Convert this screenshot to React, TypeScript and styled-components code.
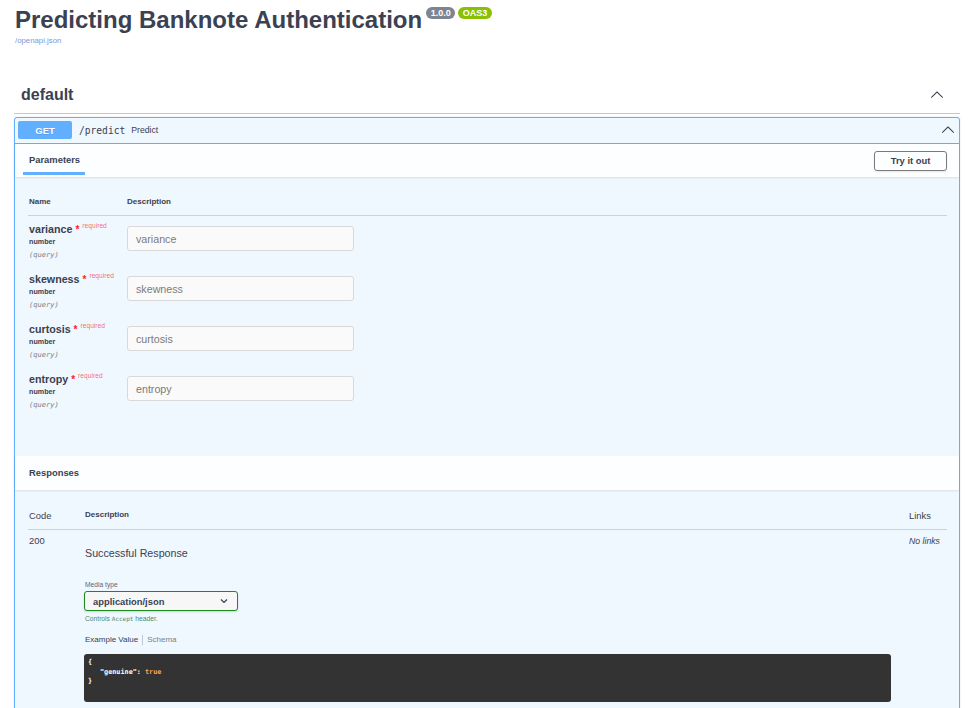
import React from "react";
import styled, { createGlobalStyle } from "styled-components";

const Global = createGlobalStyle`
  html, body { margin: 0; padding: 0; background: #fff; }
  body { font-family: "Liberation Sans", Arial, sans-serif; color: #3b4151; }
  * { box-sizing: border-box; }
`;

const Page = styled.div`
  padding: 8px 13px 0 14px;
`;

const Info = styled.div`
  display: flex;
  flex-direction: column;
  align-items: flex-start;
`;

const Title = styled.h2`
  margin: 0;
  font-size: 24px;
  line-height: 24px;
  font-weight: 700;
  color: #3b4151;
  display: flex;
  align-items: flex-start;
  padding-left: 1px;
`;

const Badge = styled.span<{ $bg: string }>`
  display: inline-block;
  margin-left: ${(p) => (p.$bg === "#7d8492" ? "4px" : "3px")};
  margin-top: -1px;
  height: 12px;
  line-height: 12px;
  padding: 0 4.5px;
  border-radius: 7px;
  background: ${(p) => p.$bg};
  color: #fff;
  font-size: 9px;
  font-weight: 700;
`;

const SpecLink = styled.a`
  margin-top: 4px;
  padding-left: 1px;
  font-size: 7.8px;
  line-height: 10px;
  color: #7d95e0;
  text-decoration: none;
`;

const TagHeading = styled.div`
  margin-top: 31px;
  height: 37px;
  display: flex;
  align-items: center;
  justify-content: space-between;
  padding: 0 16px 0 7px;
  border-bottom: 1px solid rgba(59, 65, 81, 0.3);
`;

const TagName = styled.h3`
  margin: 0;
  font-size: 16px;
  line-height: 20px;
  font-weight: 700;
  color: #3b4151;
`;

const Chevron = ({ size = 13 }: { size?: number }) => (
  <svg width={size} height={size} viewBox="0 0 20 20" aria-hidden="true">
    <path
      transform="rotate(180 10 10)"
      fill="#3b4151"
      d="M17.418 6.109c.272-.268.709-.268.979 0s.271.701 0 .969l-7.908 7.83c-.27.268-.707.268-.979 0l-7.908-7.83c-.27-.268-.27-.701 0-.969.271-.268.709-.268.979 0L10 13.25l7.418-7.141z"
    />
  </svg>
);

const OpBlock = styled.div`
  margin-top: 3px;
  border: 1px solid #61affe;
  border-radius: 3px;
  background: #eff7ff;
  box-shadow: 0 0 2px rgba(0, 0, 0, 0.12);
`;

const Summary = styled.div`
  display: flex;
  align-items: center;
  padding: 3px 3px 4px 3px;
  border-bottom: 1px solid #61affe;
`;

const Method = styled.span`
  width: 54px;
  height: 18px;
  display: flex;
  align-items: center;
  justify-content: center;
  background: #61affe;
  border-radius: 2px;
  color: #fff;
  font-size: 9.4px;
  font-weight: 700;
  text-shadow: 0 1px 0 rgba(0, 0, 0, 0.1);
`;

const Path = styled.span`
  margin-left: 7px;
  font-family: "DejaVu Sans Mono", "Liberation Mono", monospace;
  font-size: 9.6px;
  color: #3b4151;
`;

const SummaryText = styled.span`
  margin-left: 6px;
  font-size: 8.7px;
  color: #3b4151;
  flex: 1;
`;

const SummaryArrow = styled.span`
  display: flex;
  margin-right: 1px;
`;

const SectionHeader = styled.div<{ $h: number }>`
  height: ${(p) => p.$h}px;
  display: flex;
  align-items: center;
  justify-content: space-between;
  background: rgba(255, 255, 255, 0.8);
  box-shadow: 0 1px 2px rgba(0, 0, 0, 0.1);
  padding: 0 12px 0 8px;
  position: relative;
`;

const Tab = styled.div`
  align-self: flex-start;
  padding: 10px 5px 6px 6px;
  font-size: 9.4px;
  line-height: 12px;
  font-weight: 700;
  color: #3b4151;
  border-bottom: 3px solid #61affe;
`;

const SectionTitle = styled.h4`
  margin: 0;
  padding-left: 6px;
  font-size: 9.4px;
  line-height: 12px;
  font-weight: 700;
  color: #3b4151;
`;

const TryButton = styled.button`
  width: 73px;
  height: 20px;
  border: 1.4px solid #7a7a7a;
  border-radius: 3px;
  background: transparent;
  box-shadow: 0 1px 2px rgba(0, 0, 0, 0.1);
  font-family: "Liberation Sans", Arial, sans-serif;
  font-size: 9.4px;
  font-weight: 700;
  color: #3b4151;
  padding: 0;
`;

const ParamsBody = styled.div`
  padding: 20px 12px 40px 13px;
`;

const ParamGrid = styled.div`
  display: grid;
  grid-template-columns: 99px 1fr;
`;

const HeadCell = styled.div<{ $size?: number; $weight?: number; $pl?: number }>`
  font-size: ${(p) => p.$size ?? 8}px;
  line-height: ${(p) => ((p.$size ?? 8) > 9 ? 12 : 10)}px;
  font-weight: ${(p) => p.$weight ?? 700};
  color: #3b4151;
  padding: 0 0 ${(p) => ((p.$size ?? 8) > 9 ? 7 : 8)}px ${(p) => p.$pl ?? 0}px;
  border-bottom: 1px solid rgba(59, 65, 81, 0.2);
`;

const ParamRow = styled.div`
  display: contents;
`;

const NameCell = styled.div`
  height: 50px;
  padding: 7px 0 0 1px;
  display: flex;
  flex-direction: column;
`;

const ParamName = styled.div`
  font-size: 10.7px;
  line-height: 13px;
  font-weight: 700;
  color: #3b4151;
  display: flex;
  align-items: flex-start;
`;

const Star = styled.span`
  color: #ff2020;
  margin-left: 3px;
  font-size: 10px;
`;

const Required = styled.span`
  margin-left: 3px;
  margin-top: -4px;
  font-size: 6.7px;
  font-weight: 400;
  color: rgba(255, 0, 0, 0.6);
`;

const ParamType = styled.div`
  margin-top: 1px;
  font-size: 7.2px;
  line-height: 10px;
  font-weight: 700;
  color: #3b4151;
`;

const ParamIn = styled.div`
  margin-top: 3px;
  font-family: "DejaVu Sans Mono", "Liberation Mono", monospace;
  font-size: 7.1px;
  line-height: 10px;
  font-style: italic;
  color: #808080;
`;

const InputCell = styled.div`
  height: 50px;
  padding-top: 10px;
`;

const TextInput = styled.input`
  width: 227px;
  height: 25px;
  border: 1px solid #d9d9d9;
  border-radius: 3px;
  background: #fafafa;
  padding: 0 8px;
  font-family: "Liberation Sans", Arial, sans-serif;
  font-size: 10.7px;
  color: #3b4151;
  outline: none;
  &::placeholder { color: #7a7a7a; }
`;

const ResponsesBody = styled.div`
  padding: 20px 12px 24px 13px;
`;

const RespGrid = styled.div`
  display: grid;
  grid-template-columns: 56px 1fr 38px;
`;

const RespCell = styled.div`
  padding: 5px 0 0 1px;
  font-size: 9.4px;
  line-height: 12px;
  color: #3b4151;
`;

const DescCell = styled.div`
  padding: 5px 18px 0 0;
  display: flex;
  flex-direction: column;
  align-items: flex-start;
`;

const Markdown = styled.p`
  margin: 11px 0 0 1px;
  font-size: 10.7px;
  line-height: 14px;
  color: #3b4151;
`;

const SmallLabel = styled.div<{ $color?: string; $mt: number }>`
  margin-top: ${(p) => p.$mt}px;
  margin-left: 1px;
  font-size: 6.7px;
  line-height: 8px;
  color: ${(p) => p.$color ?? "#5f6673"};
`;

const Mono = styled.code`
  font-family: "DejaVu Sans Mono", "Liberation Mono", monospace;
  font-size: 6px;
`;

const Select = styled.div`
  margin-top: 2px;
  width: 154px;
  height: 20px;
  border: 1px solid #1d8a1d;
  border-radius: 3px;
  background: #f7f7f7;
  box-shadow: 0 1px 2px rgba(0, 0, 0, 0.15);
  display: flex;
  align-items: center;
  justify-content: space-between;
  padding: 0 9px 0 8px;
  font-size: 9.4px;
  font-weight: 700;
  color: #3b4151;
`;

const ExampleTabs = styled.div`
  margin-top: 12px;
  display: flex;
  align-items: center;
  font-size: 8px;
  line-height: 10px;
  margin-left: 1px;
`;

const ExTab = styled.span<{ $active?: boolean }>`
  color: ${(p) => (p.$active ? "#3b4151" : "#7a7f8c")};
`;

const Divider = styled.span`
  width: 1px;
  height: 10px;
  background: rgba(59, 65, 81, 0.25);
  margin: 0 4px;
`;

const CodeBlock = styled.pre`
  margin: 9px 0 0 0;
  width: 807px;
  height: 48px;
  background: #333;
  border-radius: 3px;
  padding: 4px 4px;
  font-family: "DejaVu Sans Mono", "Liberation Mono", monospace;
  font-size: 6.8px;
  line-height: 9.5px;
  font-weight: 700;
  color: #fff;
`;

const CodeLine = styled.div<{ $indent?: number }>`
  padding-left: ${(p) => p.$indent ?? 0}px;
`;

const Lit = styled.span`
  color: #f0a95e;
`;

const NoLinks = styled.div`
  padding: 5px 0 0 0;
  font-size: 8.7px;
  line-height: 12px;
  font-style: italic;
  color: #3b4151;
`;

const params = ["variance", "skewness", "curtosis", "entropy"];

export default function App() {
  return (
    <>
      <Global />
      <Page>
        <Info>
          <Title>
            Predicting Banknote Authentication
            <Badge $bg="#7d8492">1.0.0</Badge>
            <Badge $bg="#89bf04">OAS3</Badge>
          </Title>
          <SpecLink href="#">/openapi.json</SpecLink>
        </Info>

        <TagHeading>
          <TagName>default</TagName>
          <Chevron size={14} />
        </TagHeading>

        <OpBlock>
          <Summary>
            <Method>GET</Method>
            <Path>/predict</Path>
            <SummaryText>Predict</SummaryText>
            <SummaryArrow>
              <Chevron size={14} />
            </SummaryArrow>
          </Summary>

          <SectionHeader $h={33}>
            <Tab>Parameters</Tab>
            <TryButton>Try it out</TryButton>
          </SectionHeader>

          <ParamsBody>
            <ParamGrid>
              <HeadCell $pl={1}>Name</HeadCell>
              <HeadCell>Description</HeadCell>
              {params.map((p) => (
                <ParamRow key={p}>
                  <NameCell>
                    <ParamName>
                      {p}
                      <Star>*</Star>
                      <Required>required</Required>
                    </ParamName>
                    <ParamType>number</ParamType>
                    <ParamIn>(query)</ParamIn>
                  </NameCell>
                  <InputCell>
                    <TextInput placeholder={p} />
                  </InputCell>
                </ParamRow>
              ))}
            </ParamGrid>
          </ParamsBody>

          <SectionHeader $h={34}>
            <SectionTitle>Responses</SectionTitle>
          </SectionHeader>

          <ResponsesBody>
            <RespGrid>
              <HeadCell $size={9.4} $weight={400} $pl={1}>Code</HeadCell>
              <HeadCell $pl={1}>Description</HeadCell>
              <HeadCell $size={9.4} $weight={400}>Links</HeadCell>
              <RespCell>200</RespCell>
              <DescCell>
                <Markdown>Successful Response</Markdown>
                <SmallLabel $mt={21}>Media type</SmallLabel>
                <Select>
                  application/json
                  <svg width="8" height="6" viewBox="0 0 8 6" aria-hidden="true">
                    <path d="M1 1.5l3 3 3-3" fill="none" stroke="#3b4151" strokeWidth="1.2" />
                  </svg>
                </Select>
                <SmallLabel $mt={4} $color="#4a8a6e">
                  Controls <Mono>Accept</Mono> header.
                </SmallLabel>
                <ExampleTabs>
                  <ExTab $active>Example Value</ExTab>
                  <Divider />
                  <ExTab>Schema</ExTab>
                </ExampleTabs>
                <CodeBlock>
                  <CodeLine>{"{"}</CodeLine>
                  <CodeLine $indent={12}>
                    "genuine": <Lit>true</Lit>
                  </CodeLine>
                  <CodeLine>{"}"}</CodeLine>
                </CodeBlock>
              </DescCell>
              <NoLinks>No links</NoLinks>
            </RespGrid>
          </ResponsesBody>
        </OpBlock>
      </Page>
    </>
  );
}
